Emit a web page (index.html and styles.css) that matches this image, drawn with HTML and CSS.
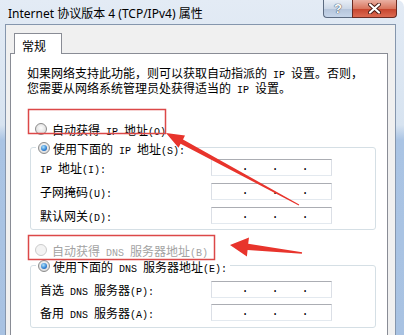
FILE: index.html
```html
<!DOCTYPE html>
<html lang="zh-CN">
<head>
    <meta charset="UTF-8">
    <meta name="viewport" content="width=device-width, initial-scale=1.0">
    <title>Internet 协议版本 4 (TCP/IPv4) 属性</title>
    <link rel="stylesheet" href="styles.css">
</head>
<body>
    <div class="window">
        <!-- Title Bar -->
        <div class="titlebar">
            <span class="title">Internet 协议版本 4 (TCP/IPv4) 属性</span>
            <div class="caption-buttons">
                <div class="cap-btn help">?</div>
                <div class="cap-btn close">
                    <svg width="13" height="11" viewBox="0 0 13 11">
                        <path d="M2 1.5 L11 9.5 M11 1.5 L2 9.5" stroke="#4a1d17" stroke-width="4" stroke-linecap="round"/>
                        <path d="M2 1.5 L11 9.5 M11 1.5 L2 9.5" stroke="#fff" stroke-width="2.2" stroke-linecap="round"/>
                    </svg>
                </div>
            </div>
        </div>

        <!-- Dialog Body -->
        <div class="dialog">
            <div class="tabs">
                <div class="tab">常规</div>
            </div>

            <div class="panel">
                <p class="intro">如果网络支持此功能，则可以获取自动指派的<span class="en"> IP </span>设置。否则，<br>您需要从网络系统管理员处获得适当的<span class="en"> IP </span>设置。</p>

                <div class="option auto-ip"><span class="radio"></span><span>自动获得<span class="en"> IP </span>地址<span class="en">(O)</span></span></div>

                <div class="group">
                    <div class="option group-title"><span class="radio checked"></span><span>使用下面的<span class="en"> IP </span>地址<span class="en">(S):</span></span></div>
                    <div class="fields">
                        <span class="field-label"><span class="en">IP </span>地址<span class="en">(I):</span></span>
                        <div class="ip-box"><span>.</span><span>.</span><span>.</span></div>
                        <span class="field-label">子网掩码<span class="en">(U):</span></span>
                        <div class="ip-box"><span>.</span><span>.</span><span>.</span></div>
                        <span class="field-label">默认网关<span class="en">(D):</span></span>
                        <div class="ip-box"><span>.</span><span>.</span><span>.</span></div>
                    </div>
                </div>

                <div class="option auto-dns"><span class="radio disabled"></span><span>自动获得<span class="en"> DNS </span>服务器地址<span class="en">(B)</span></span></div>

                <div class="group dns">
                    <div class="option group-title"><span class="radio checked"></span><span>使用下面的<span class="en"> DNS </span>服务器地址<span class="en">(E):</span></span></div>
                    <div class="fields">
                        <span class="field-label">首选<span class="en"> DNS </span>服务器<span class="en">(P):</span></span>
                        <div class="ip-box"><span>.</span><span>.</span><span>.</span></div>
                        <span class="field-label">备用<span class="en"> DNS </span>服务器<span class="en">(A):</span></span>
                        <div class="ip-box"><span>.</span><span>.</span><span>.</span></div>
                    </div>
                </div>
            </div>
        </div>

        <!-- Red annotations drawn over the screenshot -->
        <svg class="annotations" width="404" height="335" viewBox="0 0 404 335">
            <rect x="28.5" y="109.5" width="137" height="24" fill="none" stroke="#dc4848" stroke-width="1.5"/>
            <rect x="28.5" y="235.5" width="186" height="24" fill="none" stroke="#dc4848" stroke-width="1.5"/>
            <polygon fill="#e8342c" points="166,133 185,135.4 183,139.4 299.2,204.6 298.8,205.4 180.6,143.8 178.5,147.8"/>
            <polygon fill="#e8342c" points="230,245 249,237.5 248.2,243.8 302.1,252.3 301.9,253.7 247.6,250 246.9,256.5"/>
        </svg>
    </div>
</body>
</html>
```

FILE: styles.css
```css
/* General Styling */
body {
    margin: 0;
    background: #fff;
    font-family: "Noto Sans CJK SC", sans-serif;
    font-size: 12px;
    color: #000;
}

/* half-width latin, like the dialog's bitmap font */
.en {
    font-family: "Liberation Mono", monospace;
    font-size: 10px;
    line-height: 0;
}

/* Window Frame */
.window {
    position: relative;
    width: 404px;
    height: 335px;
    overflow: hidden;
    display: flex;
    flex-direction: column;
    background: linear-gradient(#e3ebf5 0, #d7e3f0 125px, #aac4e4 140px, #a8c2e2);
    border-top-right-radius: 7px;
}

.titlebar {
    display: flex;
    align-items: flex-start;
    height: 24px;
    flex-shrink: 0;
}

.title {
    margin: 4px 0 0 8px;
    font-family: "Noto Sans", "Noto Sans CJK SC", sans-serif;
    font-size: 12px;
    line-height: 20px;
    white-space: nowrap;
}

.caption-buttons {
    display: flex;
    margin-left: auto;
    margin-right: 7px;
}

.cap-btn {
    height: 18px;
    box-sizing: border-box;
    border: 1px solid #5c6b80;
    border-top: none;
    display: flex;
    align-items: center;
    justify-content: center;
}

.help {
    width: 29px;
    border-right: none;
    border-bottom-left-radius: 4px;
    background: linear-gradient(#e8eef6, #cdd8e7 50%, #b4c4da 51%, #c6d5e9);
    font-family: "Liberation Sans", sans-serif;
    font-weight: bold;
    font-size: 13px;
    color: #fff;
    text-shadow: 0 0 1px #2c3a4d, 0 0 1px #2c3a4d;
}

.close {
    width: 45px;
    border-color: #6a2b22;
    border-bottom-right-radius: 4px;
    background: linear-gradient(#eab0a3, #d9765f 50%, #c5432c 51%, #dc6a52);
}

/* Dialog Body */
.dialog {
    flex: 1;
    display: flex;
    flex-direction: column;
    margin: 0 8px 0 5px;
    padding: 8px 7px 0 4px;
    background: #f0f0f0;
    border: 1px solid #8596ad;
    border-bottom: none;
}

.tabs {
    display: flex;
    padding-left: 4px;
}

.tab {
    position: relative;
    z-index: 1;
    width: 48px;
    box-sizing: border-box;
    margin-bottom: -1px;
    padding: 3px 0 0 7px;
    background: #fff;
    border: 1px solid #898c95;
    border-bottom: none;
    line-height: 17px;
}

.panel {
    flex: 1;
    background: #fff;
    border: 1px solid #898c95;
    border-bottom: none;
}

.intro {
    margin: 11px 0 0 16px;
    line-height: 15px;
    white-space: nowrap;
}

/* Radio Options */
.option {
    display: flex;
    align-items: center;
    gap: 5px;
    height: 16px;
    white-space: nowrap;
}

.auto-ip {
    margin: 26px 0 0 24px;
}

.auto-dns {
    margin: 12px 0 0 24px;
    color: #a3a3a3;
}

.radio {
    flex-shrink: 0;
    display: flex;
    align-items: center;
    justify-content: center;
    width: 12px;
    height: 12px;
    box-sizing: border-box;
    border-radius: 50%;
    border: 1px solid #8c8c8c;
    background: radial-gradient(circle at 50% 40%, #fdfdfd, #dedede 70%, #cdcdcd);
}

.radio.checked::after {
    content: "";
    width: 6px;
    height: 6px;
    border-radius: 50%;
    background: radial-gradient(circle at 40% 35%, #b0e3fb, #2f80d2 60%, #1a4f9e);
}

.radio.disabled {
    border-color: #cbcbcb;
    background: #f3f3f3;
}

/* Group Boxes */
.group {
    margin: 10px 11px 0 19px;
    padding: 0 0 5px 9px;
    border: 1px solid #d5dfe5;
    border-radius: 3px;
}

.group.dns {
    margin-top: 7px;
    padding-bottom: 6px;
}

.group-title {
    width: fit-content;
    gap: 3px;
    margin: -8px 0 0 -4px;
    padding: 0 3px 0 2px;
    background: #fff;
}

.fields {
    display: grid;
    grid-template-columns: 171px 121px;
    row-gap: 7px;
    align-items: center;
    margin-top: 3px;
}

.dns .fields {
    margin-top: 7px;
    row-gap: 6px;
}

.field-label {
    white-space: nowrap;
    line-height: 14px;
}

.ip-box {
    display: flex;
    height: 17px;
    box-sizing: border-box;
    padding-left: 18px;
    background: #fff;
    border: 1px solid #dbdfe6;
    border-top-color: #abadb3;
    border-bottom-color: #e3e9ef;
    font-family: "Liberation Mono", monospace;
}

.ip-box span {
    width: 30px;
    text-align: center;
    line-height: 15px;
}

/* Annotations */
.annotations {
    position: absolute;
    top: 0;
    left: 0;
    pointer-events: none;
}
```
